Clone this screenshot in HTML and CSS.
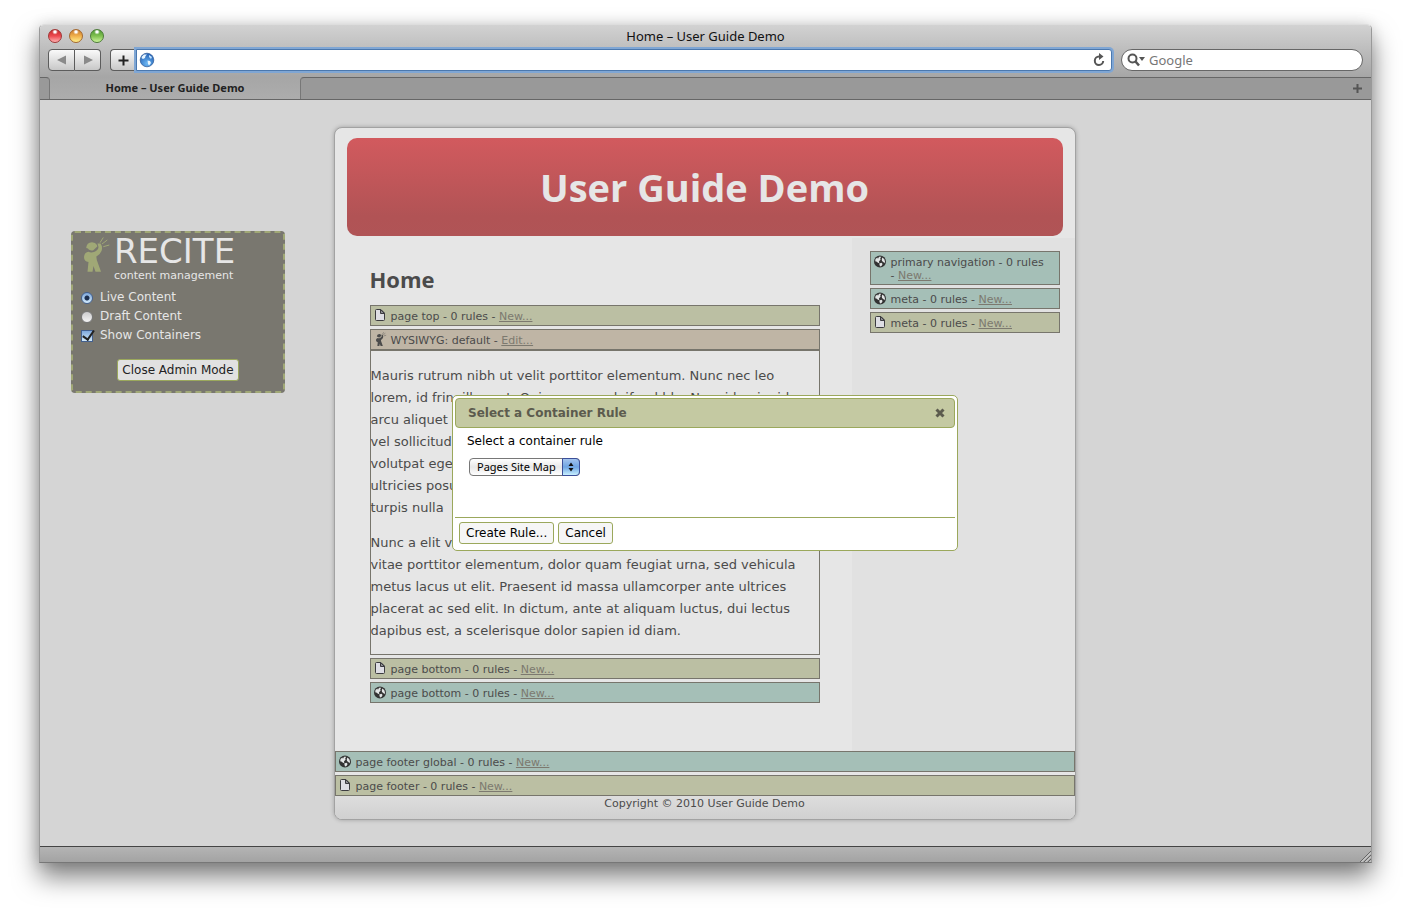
FILE: index.html
```html
<!DOCTYPE html>
<html lang="en">
<head>
<meta charset="utf-8">
<title>Home – User Guide Demo</title>
<link rel="stylesheet" href="styles.css">
</head>
<body>
<svg class="defs" aria-hidden="true">
  <symbol id="page" viewBox="0 0 12 13"><path d="M1.5 1.5Q1.500.5 2.500.5H7L10.500 4V10.500Q10.500 11.500 9.500 11.500H2.500Q1.500 11.500 1.500 10.500Z" fill="#dedee4" stroke="#3c3c40"/><path d="M6.500.5V4.500H10.500Z" fill="#8d8d93" stroke="#3c3c40"/></symbol>
  <symbol id="globe" viewBox="0 0 12 12"><circle cx="6" cy="6" r="6" fill="#333"/><path d="M1.500 3.500L3.300 2 4 3.200 5 1.200 7.200 1.300 6.200 3 6.600 4.300 5 5.800 5.300 7.200 4.200 7.500 2.800 6.200 1.200 5.800ZM5.200 8L7.500 7.300 8.600 8.500 7.500 10.600 6 11Z" fill="#e2e5e5"/><path d="M8.300 2L10.200 3.600 11 6 10.500 7.800 9.300 6.600 8 5.600 7.800 3.800Z" fill="#e2e5e5"/></symbol>
  <symbol id="man" viewBox="0 0 27 37"><path d="M3.200 11Q3.500 5.500 9 5.200Q12.500 5.300 14 8L14.300 9.500 10 13.500Q6 13.500 5 11.500Z"/><path d="M14.500 6.500L17.500 6.500Q20 10 18.500 14Q17 17.500 13.300 19.500L13.800 23 18 34.700H12.500L10.500 29 9.500 34.700H4.500L5.500 25Q1 24.500 1 20Q1.500 15.500 5.500 14.800Q8 16 11 15Q15.500 13 15.500 10Z"/><path d="M17 5.700L20.300.5M19 7L24.300 3M20.300 9.700L26.300 8" fill="none" stroke="currentColor" stroke-width="1"/></symbol>
</svg>
<div class="window">
  <header class="chrome">
    <div class="titlebar">
      <span class="lights"><i class="light red"></i><i class="light amber"></i><i class="light green"></i></span>
      <span class="window-title">Home – User Guide Demo</span>
    </div>
    <div class="toolbar">
      <div class="nav">
        <button type="button" aria-label="Back"><svg width="10" height="10" viewBox="0 0 10 10"><path d="M0 5L9 .5V9.500Z" fill="#8a8a8a"/></svg></button>
        <button type="button" aria-label="Forward"><svg width="10" height="10" viewBox="0 0 10 10"><path d="M10 5L1 .5V9.500Z" fill="#8a8a8a"/></svg></button>
      </div>
      <div class="address">
        <button type="button" class="add" aria-label="Add bookmark"><svg width="11" height="11" viewBox="0 0 11 11"><path d="M5.500.5V10.500M.5 5.500H10.500" stroke="#222" stroke-width="2"/></svg></button>
        <div class="url">
          <svg width="16" height="16" viewBox="0 0 16 16"><defs><radialGradient id="blue" cx=".5" cy=".75" r=".8"><stop offset="0" stop-color="#6db8f4"/><stop offset="1" stop-color="#1b56ad"/></radialGradient></defs><circle cx="8" cy="8" r="6.800" fill="url(#blue)" stroke="#2b5895" stroke-width=".7"/><path d="M3 4.500L5 2.500 8 2.500 6.500 4 6 6 4 7 2.500 6ZM8.500 8.500L11 9 12 11 10 13.500 9 12Z" fill="#e8f6ff"/><path d="M10 3L13 5 12 7 10 5Z" fill="#bfe2ff"/></svg>
          <input type="text" aria-label="Address">
          <svg width="12" height="14" viewBox="0 0 12 14"><path d="M8 3.600H6A4.200 4.200 0 1 0 10.200 8" fill="none" stroke="#555" stroke-width="2"/><path d="M6 0L10.500 3.600 6 7Z" fill="#555"/></svg>
        </div>
      </div>
      <label class="search">
        <svg width="18" height="14" viewBox="0 0 18 14"><circle cx="5.500" cy="5.500" r="4" fill="none" stroke="#555" stroke-width="2"/><path d="M8.500 8.500L12 12.500" stroke="#555" stroke-width="2.500"/><path d="M12 4H18L15 8Z" fill="#555"/></svg>
        <input type="text" aria-label="Search" placeholder="Google">
      </label>
    </div>
    <div class="tabbar">
      <div class="stub"></div>
      <div class="tab">Home – User Guide Demo</div>
      <div class="rest"><button type="button" aria-label="New tab"><svg width="9" height="9" viewBox="0 0 9 9"><path d="M4.500 0V9M0 4.500H9" stroke="#555" stroke-width="2"/></svg></button></div>
    </div>
  </header>

  <main class="viewport">
    <div class="site">
      <div class="banner"><h1>User Guide Demo</h1></div>
      <div class="columns">
        <article class="content">
          <h2>Home</h2>
          <div class="stack">
            <div class="bar olive"><svg class="icon"><use href="#page"/></svg><span>page top - 0 rules - <a href="#">New...</a></span></div>
            <section>
              <div class="bar tan"><svg class="icon man"><use href="#man"/></svg><span>WYSIWYG: default - <a href="#">Edit...</a></span></div>
              <div class="block">
                <p>Mauris rutrum nibh ut velit porttitor elementum. Nunc nec leo<br>lorem, id fringilla erat. Quisque non eleifend bla. Nam id enim id<br>arcu aliquet<br>vel sollicitudin<br>volutpat eget<br>ultricies posuere<br>turpis nulla</p>
                <p>Nunc a elit vel<br>vitae porttitor elementum, dolor quam feugiat urna, sed vehicula<br>metus lacus ut elit. Praesent id massa ullamcorper ante ultrices<br>placerat ac sed elit. In dictum, ante at aliquam luctus, dui lectus<br>dapibus est, a scelerisque dolor sapien id diam.</p>
              </div>
            </section>
            <div class="bar olive"><svg class="icon"><use href="#page"/></svg><span>page bottom - 0 rules - <a href="#">New...</a></span></div>
            <div class="bar teal"><svg class="icon"><use href="#globe"/></svg><span>page bottom - 0 rules - <a href="#">New...</a></span></div>
          </div>
        </article>
        <aside class="sidebar stack">
          <div class="bar teal"><svg class="icon"><use href="#globe"/></svg><span>primary navigation - 0 rules<br>- <a href="#">New...</a></span></div>
          <div class="bar teal"><svg class="icon"><use href="#globe"/></svg><span>meta - 0 rules - <a href="#">New...</a></span></div>
          <div class="bar olive"><svg class="icon"><use href="#page"/></svg><span>meta - 0 rules - <a href="#">New...</a></span></div>
        </aside>
      </div>
      <footer>
        <div class="stack">
          <div class="bar teal"><svg class="icon"><use href="#globe"/></svg><span>page footer global - 0 rules - <a href="#">New...</a></span></div>
          <div class="bar olive"><svg class="icon"><use href="#page"/></svg><span>page footer - 0 rules - <a href="#">New...</a></span></div>
        </div>
        <p class="copyright">Copyright © 2010 User Guide Demo</p>
      </footer>
    </div>

    <form class="admin">
      <div class="logo">
        <svg width="27" height="37"><use href="#man"/></svg>
        <div><span class="brand">RECITE</span><span class="tagline">content management</span></div>
      </div>
      <label><input type="radio" name="mode" checked>Live Content</label>
      <label><input type="radio" name="mode">Draft Content</label>
      <label><input type="checkbox" checked>Show Containers</label>
      <button type="button" class="btn">Close Admin Mode</button>
    </form>

    <form class="dialog" role="dialog" aria-labelledby="dialog-title">
      <div class="dialog-head"><h3 id="dialog-title">Select a Container Rule</h3><button type="button" aria-label="Close"><svg width="10" height="10" viewBox="0 0 10 10"><path d="M1.500 1.500L8.500 8.500M8.500 1.500L1.500 8.500" stroke="#5c5b4e" stroke-width="3"/></svg></button></div>
      <div class="dialog-body">
        <label for="rule">Select a container rule</label>
        <div class="select"><select id="rule"><option>Pages Site Map</option></select><span class="arrows"><svg width="6" height="10" viewBox="0 0 6 10"><path d="M.5 4L3 .5 5.500 4ZM.5 6L3 9.500 5.500 6Z" fill="#111"/></svg></span></div>
      </div>
      <div class="dialog-foot"><button type="button" class="btn">Create Rule...</button><button type="button" class="btn">Cancel</button></div>
    </form>
  </main>
  <div class="statusbar"><svg width="12" height="12" viewBox="0 0 12 12"><path d="M1 12L12 1M5 12L12 5M9 12L12 9" stroke="#666"/><path d="M2.500 12L12 2.500M6.500 12L12 6.500M10.500 12L12 10.500" stroke="#ddd"/></svg></div>
</div>
</body>
</html>
```

FILE: styles.css
```css
* { box-sizing: border-box; }
body { margin: 0; padding: 24px 39px 54px; background: #fff; font: 13px/22px "DejaVu Sans", Verdana, sans-serif; color: #4b4b4b; }
button, input, select { font: inherit; margin: 0; }
button { cursor: pointer; }
h1, h2, h3, p { margin: 0; }
svg { flex: none; }
.defs { position: absolute; width: 0; height: 0; }

.window { border: 1px solid #999; border-top-color: #ddd; border-bottom-color: #777; border-radius: 5px 5px 0 0; box-shadow: 0 14px 26px rgba(0, 0, 0, .5), 0 0 14px rgba(0, 0, 0, .12); }
.chrome { background: linear-gradient(#d2d2d2, #a6a6a6 52px, #adadad); border-radius: 4px 4px 0 0; font-family: "Noto Sans", "Open Sans", sans-serif; }
.titlebar { display: flex; align-items: center; height: 22px; padding: 0 8px; color: #111; }
.lights { display: flex; flex: 1; gap: 7px; }
.titlebar::after { content: ""; flex: 1; }
.light { width: 14px; height: 14px; border-radius: 50%; border: 1px solid #8888; }
.red { background: radial-gradient(circle at 50% 15%, #fff 0 8%, transparent 24%), linear-gradient(#c22a2a, #ed4a50 50%, #ffb2b2); border-color: #a03636; }
.amber { background: radial-gradient(circle at 50% 15%, #fff 0 8%, transparent 24%), linear-gradient(#c9792a, #f0b04c 50%, #fff08c); border-color: #a4682e; }
.green { background: radial-gradient(circle at 50% 15%, #fff 0 8%, transparent 24%), linear-gradient(#4f9a34, #80c050 50%, #ccf59b); border-color: #4c7c38; }
.toolbar { display: flex; gap: 9px; padding: 2px 8px 6px; }
.nav, .address { display: flex; height: 22px; }
.nav button, .add { display: flex; align-items: center; justify-content: center; width: 27px; padding: 0; border: 1px solid #5c5c5c; background: linear-gradient(#fafafa, #c8c8c8); }
.nav button:first-child { border-radius: 4px 0 0 4px; }
.nav button:last-child { border-left: 0; border-radius: 0 4px 4px 0; width: 26px; }
.address { flex: 1; }
.add { border-radius: 4px 0 0 4px; border-right: 0; }
.nav + .address .add { width: 26px; }
.url { display: flex; flex: 1; align-items: center; gap: 4px; padding: 0 6px 0 2px; background: #fff; border: 1px solid #4b78ae; border-radius: 0 3px 3px 0; box-shadow: 0 0 0 2px #7fa6d4; }
.url input, .search input { flex: 1; min-width: 0; border: 0; outline: 0; padding: 0; background: none; }
.search { display: flex; align-items: center; gap: 4px; width: 242px; padding: 0 5px; background: #fff; border: 1px solid #666; border-radius: 11px; }
.search input { line-height: 18px; }
.search input::placeholder { color: #777; opacity: 1; }
.tabbar { display: flex; height: 23px; border-bottom: 1px solid #666; }
.stub, .rest { background: #999; border-top: 1px solid #666; }
.stub { width: 10px; border-right: 1px solid #777; border-radius: 0 4px 0 0; }
.tab { width: 250px; font-size: 11px; line-height: 22px; font-weight: 700; text-align: center; color: #222; border-radius: 0 0 4px 4px; }
.rest { display: flex; flex: 1; align-items: center; justify-content: flex-end; padding-right: 9px; border-left: 1px solid #777; border-radius: 4px 0 0 0; }
.rest button { display: flex; padding: 0; border: 0; background: none; }

.viewport { position: relative; background: #d5d5d5; padding: 27px 2px 26px 0; }
.site { width: 742px; max-width: 100%; margin: 0 auto; background: #e6e6e6; border: 1px solid #a2a2a2; border-radius: 8px; box-shadow: 0 0 4px rgba(0, 0, 0, .25); overflow: hidden; }
.banner { margin: 10px 12px 2px; padding: 21px 0; border-radius: 10px; background: linear-gradient(#d25a5e, #b15355 80%, #b05456); }
.banner h1 { font: 700 38px/56px "Open Sans", "Noto Sans", sans-serif; text-align: center; color: #e6e6e6; }
.columns { display: flex; }
.content { flex: 1; min-width: 0; padding: 26px 32px 48px 35px; }
.content h2 { font: 700 22px/30px "Open Sans", "Noto Sans", sans-serif; margin-bottom: 11px; }
.stack { display: flex; flex-direction: column; gap: 3px; }
.sidebar { width: 223px; padding: 13px 15px 48px 18px; background: #e1e1e1; }
.bar { display: flex; align-items: flex-start; gap: 5px; padding: 3px; border: 1px solid #77756c; font-size: 11px; line-height: 13px; }
.bar span { padding-top: 1px; margin-bottom: -1px; }
.bar a { color: #7c796f; }
.icon { width: 12px; height: 13px; }
.icon.man { width: 14px; height: 15px; margin: -1px -2px -1px 0; color: #4b4b4b; fill: currentColor; }
.olive { background: #bbbfa3; }
.teal { background: #a5bfb7; }
.tan { background: #bfb5a5; }
.block { padding-top: 14px; border: 1px solid #77756c; white-space: nowrap; }
.block p { margin-bottom: 13px; }
.block p:last-child { margin-bottom: 12px; }
footer { background: linear-gradient(#e6e6e6 30px, #d0d0d0); }
.copyright { font-size: 11px; line-height: 13px; text-align: center; padding: 1px 0 9px; }

.admin { position: absolute; left: 31px; top: 131px; width: 214px; padding: 0 8px 10px; display: flex; flex-direction: column; background: #79776f; border: 2px dashed #a0a876; border-radius: 4px; font-size: 12px; line-height: 19px; color: #e6e6e6; }
.logo { display: flex; gap: 4px; margin-bottom: 6px; color: #a0a876; fill: currentColor; }
.logo svg { margin: 4px 0 0 2px; }
.logo div { display: flex; flex-direction: column; color: #e6e6e6; }
.brand { font-size: 34px; line-height: 36px; }
.tagline { font-size: 11px; line-height: 13px; }
.admin label { display: flex; align-items: center; gap: 7px; }
.admin input { appearance: none; width: 12px; height: 12px; border: 1px solid #777; background: linear-gradient(#ccc, #f4f4f4); }
.admin input[type="radio"] { border-radius: 50%; }
.admin input:checked { background: linear-gradient(#7fa8dc, #d4ecfc); border-color: #44618f; }
.admin input[type="radio"]:checked { background: radial-gradient(circle, #1c2f50 0 2px, transparent 3px), linear-gradient(#7fa8dc, #d4ecfc); }
.admin input[type="checkbox"] { position: relative; }
.admin input[type="checkbox"]::after { content: ""; position: absolute; left: 3px; top: -3px; width: 5px; height: 10px; border: solid #222; border-width: 0 2px 2px 0; transform: rotate(35deg); }
.btn { padding: 0 6px; border: 1px solid #9ba85c; border-radius: 3px; background: #f6f6f6; color: #000; font-size: 12px; line-height: 20px; }
.admin .btn { align-self: center; margin-top: 14px; padding: 0 4px; background: #e1e1e1; color: #222; }

.dialog { position: absolute; left: 412px; top: 295px; width: 506px; padding: 2px; background: #fff; border: 1px solid #9ba85c; border-radius: 5px; color: #000; font-size: 12px; }
.dialog-head { display: flex; align-items: center; justify-content: space-between; padding: 3px 9px 3px 12px; background: #c4c9a2; border: 1px solid #9ba85c; border-radius: 4px; }
.dialog-head h3 { font-size: 12px; line-height: 22px; color: #5c5b4e; }
.dialog-head button { display: flex; padding: 0; border: 0; background: none; }
.dialog-body { padding: 2px 12px 41px; }
.select { display: flex; position: relative; width: 111px; height: 18px; margin: 6px 2px 0; }
.select select { appearance: none; width: 100%; padding: 0 7px; border: 1px solid #777; border-radius: 4px; background: linear-gradient(#fff, #e8e8e8 50%, #fff); color: #000; font: 11px/16px "Noto Sans", "Open Sans", sans-serif; }
.arrows { position: absolute; right: 0; top: 0; width: 18px; height: 18px; display: flex; align-items: center; justify-content: center; border: 1px solid #3c4f99; border-radius: 0 4px 4px 0; background: linear-gradient(#a4c4ee, #6ea4e2 50%, #c8f0ff); pointer-events: none; }
.dialog-foot { display: flex; gap: 4px; padding: 4px; border-top: 1px solid #9ba85c; }

.statusbar { display: flex; justify-content: flex-end; align-items: flex-end; height: 16px; border-top: 1px solid #444; background: linear-gradient(#b4b4b4, #a3a3a3); }
```
